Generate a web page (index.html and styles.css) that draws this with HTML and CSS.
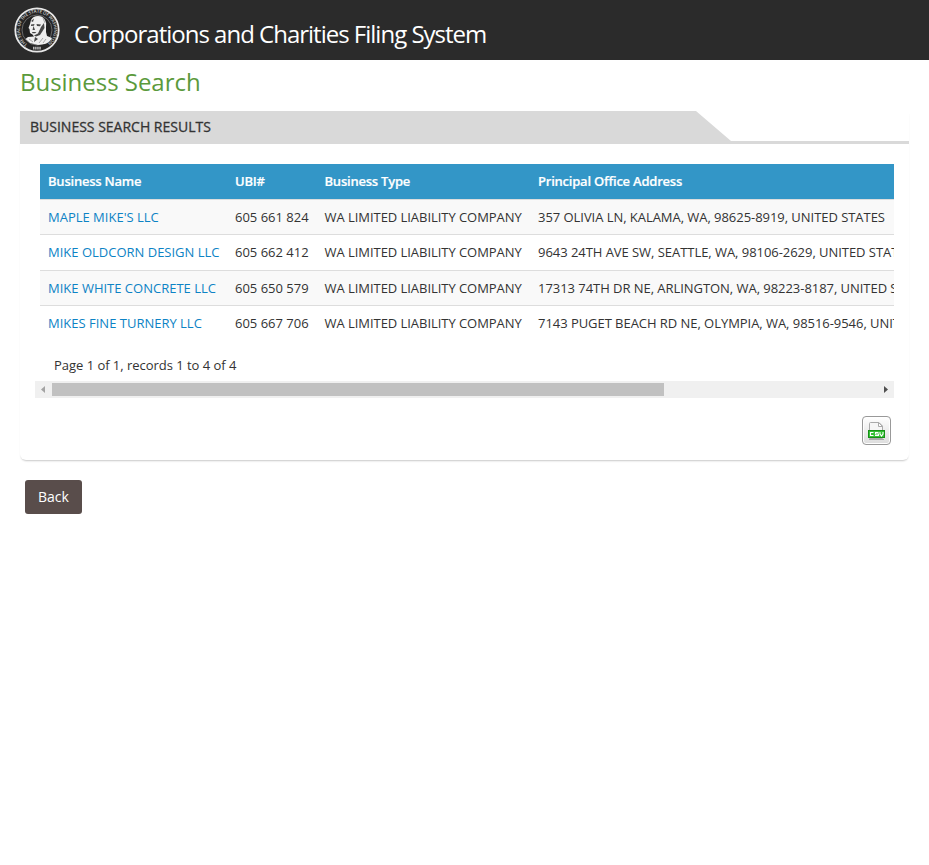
FILE: index.html
```
<!DOCTYPE html>
<html lang="en">
<head>
<meta charset="utf-8">
<title>Corporations and Charities Filing System</title>
<link rel="stylesheet" href="styles.css">
</head>
<body>
<header class="topbar">
  <svg class="seal" viewBox="0 0 46 46" aria-hidden="true">
    <defs><path id="ring" d="M13.500 37.200A17.100 17.100 0 1 1 32.500 37.200"/></defs>
    <circle cx="23" cy="23" r="21.7" fill="#262626" stroke="#e8e8e8" stroke-width="1.8"/>
    <circle cx="23" cy="23" r="15" fill="#222" stroke="#999" stroke-width=".6"/>
    <text class="motto"><textPath href="#ring" textLength="85">THE SEAL OF THE STATE OF WASHINGTON</textPath></text>
    <path d="M19 41.200H27" stroke="#bbb" stroke-width="2.800" stroke-dasharray="1.500 .600"/>
    <path d="M17 13Q19 9 24 9Q29 9 31 13Q33 16 32 20L32 25L33 29L38 31Q36 35 31 37L24 38L16 36L11.500 32L14 30L20 29.500L18.500 27.500L16 26L15.500 22L14.500 21L16 17Z" fill="#efefef"/>
    <path d="M17 14L20 11.500L19 15ZM17 17.500L20.500 17L20 18.800L17 19ZM22.500 17L27 17.500L26 19.300L23 19ZM19.500 19L21 23L18.500 23ZM18 25H22.500L21 26.300L18.500 26.200ZM27 20L30 16L30.500 21L28 25L26 28L22 29.500L20 28.500L24 26.500ZM21 30L24 32L20 35Z" fill="#484848"/>
    <path d="M15 32L19 35M29 31L25 36M32 32L29 36M29 11L31 16" fill="none" stroke="#888" stroke-width=".7"/>
  </svg>
  <div class="brand">Corporations and Charities Filing System</div>
</header>
<main>
  <h1>Business Search</h1>
  <section class="panel">
    <div class="tabline"><h2>BUSINESS SEARCH RESULTS</h2></div>
    <div class="results">
      <table>
        <colgroup><col class="c-name"><col class="c-ubi"><col class="c-type"><col class="c-addr"></colgroup>
        <thead><tr><th>Business Name</th><th>UBI#</th><th>Business Type</th><th>Principal Office Address</th></tr></thead>
        <tbody>
          <tr><td><a>MAPLE MIKE'S LLC</a></td><td>605 661 824</td><td>WA LIMITED LIABILITY COMPANY</td><td>357 OLIVIA LN, KALAMA, WA, 98625-8919, UNITED STATES</td></tr>
          <tr><td><a>MIKE OLDCORN DESIGN LLC</a></td><td>605 662 412</td><td>WA LIMITED LIABILITY COMPANY</td><td>9643 24TH AVE SW, SEATTLE, WA, 98106-2629, UNITED STATES</td></tr>
          <tr><td><a>MIKE WHITE CONCRETE LLC</a></td><td>605 650 579</td><td>WA LIMITED LIABILITY COMPANY</td><td>17313 74TH DR NE, ARLINGTON, WA, 98223-8187, UNITED STATES</td></tr>
          <tr><td><a>MIKES FINE TURNERY LLC</a></td><td>605 667 706</td><td>WA LIMITED LIABILITY COMPANY</td><td>7143 PUGET BEACH RD NE, OLYMPIA, WA, 98516-9546, UNITED STATES</td></tr>
        </tbody>
      </table>
      <p class="pager">Page 1 of 1, records 1 to 4 of 4</p>
    </div>
    <div class="scrollbar">
      <svg width="17" height="17"><path d="M10 5V12L6 8.5Z" fill="#a3a3a3"/></svg>
      <div class="track"><div class="thumb"></div></div>
      <svg width="17" height="17"><path d="M7 5V12L11 8.5Z" fill="#505050"/></svg>
    </div>
    <button class="csv" aria-label="Export CSV">
      <svg width="17" height="19" viewBox="0 0 17 19">
        <path d="M1 17H16V18H1Z" fill="#aaa"/>
        <path d="M1.500 1.500Q1.500 .5 2.500 .5H11L14.500 4V16.500H1.500Z" fill="#f6f6f6" stroke="#aaa"/>
        <path d="M10.500 .5V4.500H14.500Z" fill="#fff" stroke="#aaa"/>
        <rect x=".5" y="8.500" width="16" height="7" fill="#32c032" stroke="#169016"/>
        <path d="M5.500 10.500H2.500V13.500H5.500M10.500 10.500H7.500V12H10.500V13.500H7M12 10V12L13.500 14L15 12V10" fill="none" stroke="#fff" stroke-width="1.100"/>
      </svg>
    </button>
  </section>
  <button class="back">Back</button>
</main>
</body>
</html>
```
FILE: styles.css
```
* { box-sizing: border-box; }
body { margin: 0; background: #fff; color: #333; font: 13px/20px "Open Sans", sans-serif; }
.topbar { height: 60px; background: #2b2b2b; display: flex; padding: 7px 0 0 14px; }
.seal { width: 46px; height: 46px; flex: none; }
.motto { font: 600 4.500px "Open Sans", sans-serif; fill: #ccc; }
.brand { margin: 11px 0 0 14px; color: #fff; font-size: 24px; line-height: 32px; letter-spacing: -1px; white-space: nowrap; }
main { padding: 0 20px; }
h1 { margin: 0; padding-top: 5px; height: 51px; font-size: 24px; line-height: 34px; font-weight: 400; letter-spacing: -.03px; color: #5b9a3c; }
.panel { height: 349px; border-radius: 0 0 6px 6px; box-shadow: 0 2px 2px -1px rgba(0,0,0,.22); display: flex; flex-direction: column; }
.tabline { height: 33px; border-bottom: 3px solid #d9d9d9; flex: none; }
h2 { margin: 0; width: 711px; height: 30px; padding-left: 10px; background: #d9d9d9; clip-path: polygon(0 0, 676px 0, 100% 100%, 0 100%); font-size: 14px; line-height: 32px; font-weight: 400; -webkit-text-stroke: .3px #333; }
.results { margin: 20px 15px 0 20px; height: 217px; overflow: hidden; flex: none; }
table { table-layout: fixed; width: 1200px; border-collapse: separate; border-spacing: 0; }
.c-name { width: 187px; }
.c-ubi { width: 89.500px; }
.c-type { width: 213.500px; }
th, td { padding: 0 8px; text-align: left; white-space: nowrap; }
th { height: 35px; padding-bottom: 1px; background: #3396c7; color: #fff; font-weight: 600; letter-spacing: -.22px; -webkit-text-stroke: .2px #fff; }
td { height: 35px; border-top: 1px solid #ddd; }
td:nth-child(n+3) { letter-spacing: -.045px; }
tbody tr:nth-child(even) td { height: 36px; padding-bottom: 1px; }
tbody tr:nth-child(odd) { background: #f9f9f9; }
a { color: #0d83c5; }
.pager { margin: 14px 0 0 14px; letter-spacing: -.03px; }
.scrollbar { margin: 0 15px; height: 17px; background: #f0f0f0; display: flex; flex: none; }
.track { flex: 1; padding: 2px 0; }
.thumb { width: 612px; height: 13px; background: #c1c1c1; }
.csv { align-self: flex-end; margin: 18px 18px 0 0; width: 29px; height: 29px; padding: 1px 0 0; border: 1px solid #999; border-radius: 4px; background: linear-gradient(#fff, #ddd); box-shadow: inset 0 0 0 1px #fff; display: flex; align-items: center; justify-content: center; flex: none; }
.back { display: block; margin: 20px 0 0 5px; width: 57px; height: 34px; border: 0; border-radius: 3px; background: #594d4b; color: #fff; font: 14px/20px "Open Sans", sans-serif; padding: 0; }
```
